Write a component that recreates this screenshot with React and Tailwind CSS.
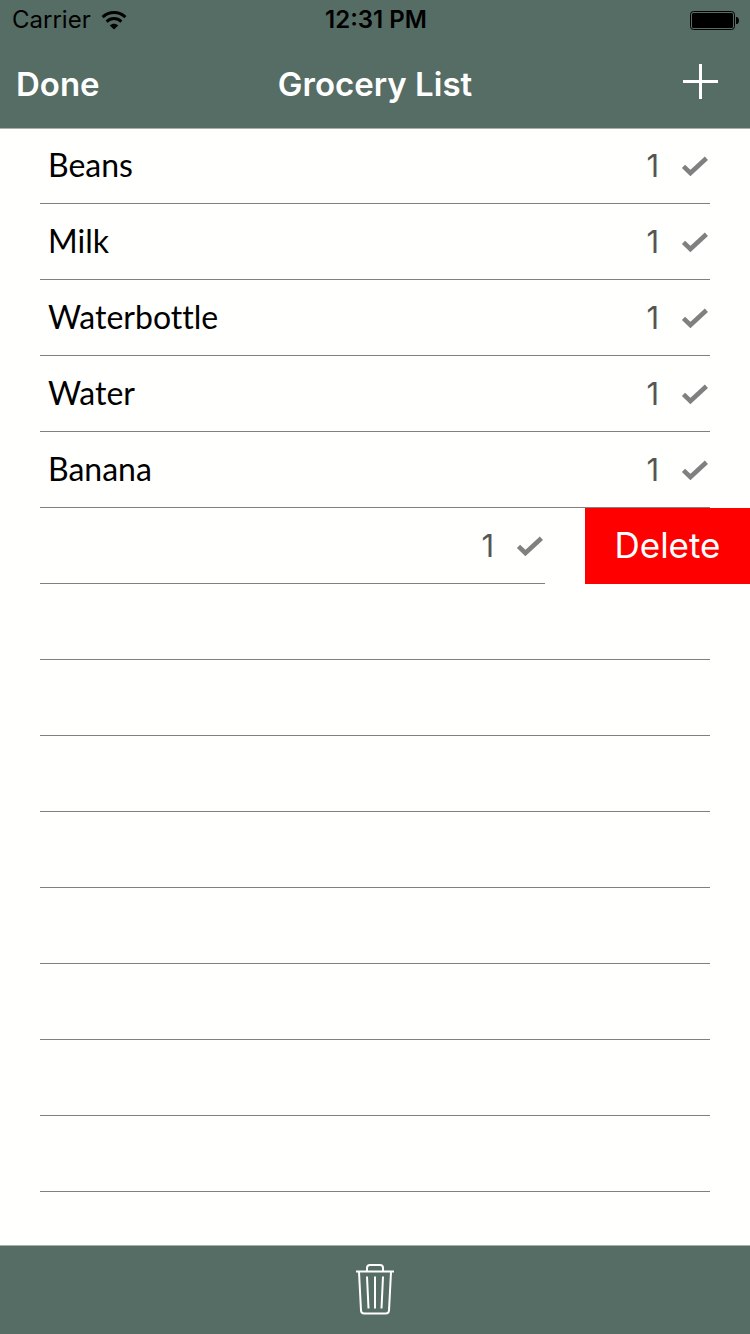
import React from "react";

const items = [
  { name: "Beans", quantity: 1 },
  { name: "Milk", quantity: 1 },
  { name: "Waterbottle", quantity: 1 },
  { name: "Water", quantity: 1 },
  { name: "Banana", quantity: 1 },
  { name: "", quantity: 1, swiped: true },
];

const blankRows = 8;

function WifiIcon() {
  return (
    <svg width="26" height="19" viewBox="0 0 26 19" fill="none" aria-hidden="true">
      <path d="M1.6 6.2C8 0 18 0 24.4 6.2" stroke="#000" strokeWidth="3" />
      <path d="M5.6 10.6C9.8 6.6 16.2 6.6 20.4 10.6" stroke="#000" strokeWidth="3" />
      <path d="M13 18.6L8.8 14.4C11.2 12.2 14.8 12.2 17.2 14.4Z" fill="#000" />
    </svg>
  );
}

function BatteryIcon() {
  return (
    <svg width="50" height="20" viewBox="0 0 50 20" fill="none" role="img" aria-label="Battery full">
      <rect x="0.5" y="1.5" width="44" height="18" rx="3" stroke="#000" />
      <rect x="2" y="3" width="41" height="15" rx="1.5" fill="#000" />
      <path d="M46 7h1.2q1.8 1 1.8 3.5T47.2 14H46Z" fill="#000" />
    </svg>
  );
}

function PlusIcon() {
  return (
    <svg width="35" height="35" viewBox="0 0 35 35" fill="#fff" aria-hidden="true">
      <rect x="0" y="16" width="35" height="3" />
      <rect x="16" y="0" width="3" height="35" />
    </svg>
  );
}

function CheckIcon() {
  return (
    <svg width="28" height="22" viewBox="0 0 28 22" fill="none" aria-hidden="true">
      <path d="M2.5 11.4L9.4 18L25.4 3.2" stroke="#808080" strokeWidth="4.6" />
    </svg>
  );
}

function TrashIcon() {
  return (
    <svg width="38" height="51" viewBox="0 0 38 51" fill="none" stroke="#fff" strokeWidth="2" aria-hidden="true">
      <path d="M0 7.5H38" />
      <path d="M11 7V4Q11 1 14 1H24Q27 1 27 4V7" />
      <path d="M3 8L5 46.5Q5.2 49.5 8.2 49.5H29.8Q32.8 49.5 33 46.5L35 8" />
      <path d="M11 12.5L12.5 44.5M19 12.5V44.5M27 12.5L25.5 44.5" />
    </svg>
  );
}

function ItemRow({ item }) {
  return (
    <li className="flex h-[76px]">
      <div className="mx-10 flex flex-1 items-center border-b border-[#808080] pl-2">
        <span className="flex-1 pb-0.5 font-['Lato','Noto_Sans',sans-serif] text-[32px] leading-10 text-black [font-variant-ligatures:none]">
          {item.name}
        </span>
        <span className="font-['Inter',sans-serif] text-[31px] leading-10 text-[#555555]">
          {item.quantity}
        </span>
        <button type="button" aria-label="Mark as done" className="ml-[22px] pr-px">
          <CheckIcon />
        </button>
      </div>
      {item.swiped && (
        <button
          type="button"
          className="w-[165px] bg-[#ff0000] pb-0.5 font-['Inter',sans-serif] text-[35px] leading-10 text-white"
        >
          Delete
        </button>
      )}
    </li>
  );
}

export default function App() {
  return (
    <div className="flex min-h-screen flex-col bg-[#fffffd] font-['Inter',sans-serif]">
      <header className="relative h-32 bg-[#556d64] shadow-[0_1px_0_#aaaeab]">
        <div className="grid h-10 grid-cols-3 items-center pr-2.5 pl-3 text-black">
          <div className="flex items-center gap-2.5">
            <span className="text-[24px] leading-10">Carrier</span>
            <WifiIcon />
          </div>
          <span className="text-center text-[24px] leading-10 font-semibold">12:31 PM</span>
          <div className="flex justify-end">
            <BatteryIcon />
          </div>
        </div>
        <div className="grid h-[88px] grid-cols-[1fr_auto_1fr] items-center px-4 text-[33px] leading-10 font-semibold text-white">
          <button type="button" className="justify-self-start">
            Done
          </button>
          <h1>Grocery List</h1>
          <button type="button" aria-label="Add item" className="justify-self-end pr-4 pb-1.5">
            <PlusIcon />
          </button>
        </div>
      </header>
      <main className="flex-1">
        <ul>
          {items.map((item, index) => (
            <ItemRow key={index} item={item} />
          ))}
          {Array.from({ length: blankRows }, (_, index) => (
            <li key={index} className="mx-10 h-[76px] border-b border-[#808080]" />
          ))}
        </ul>
      </main>
      <footer className="flex h-[89px] items-center justify-center border-t border-[#aaaeab] bg-[#556d64]">
        <button type="button" aria-label="Delete list" className="pb-0.5">
          <TrashIcon />
        </button>
      </footer>
    </div>
  );
}
